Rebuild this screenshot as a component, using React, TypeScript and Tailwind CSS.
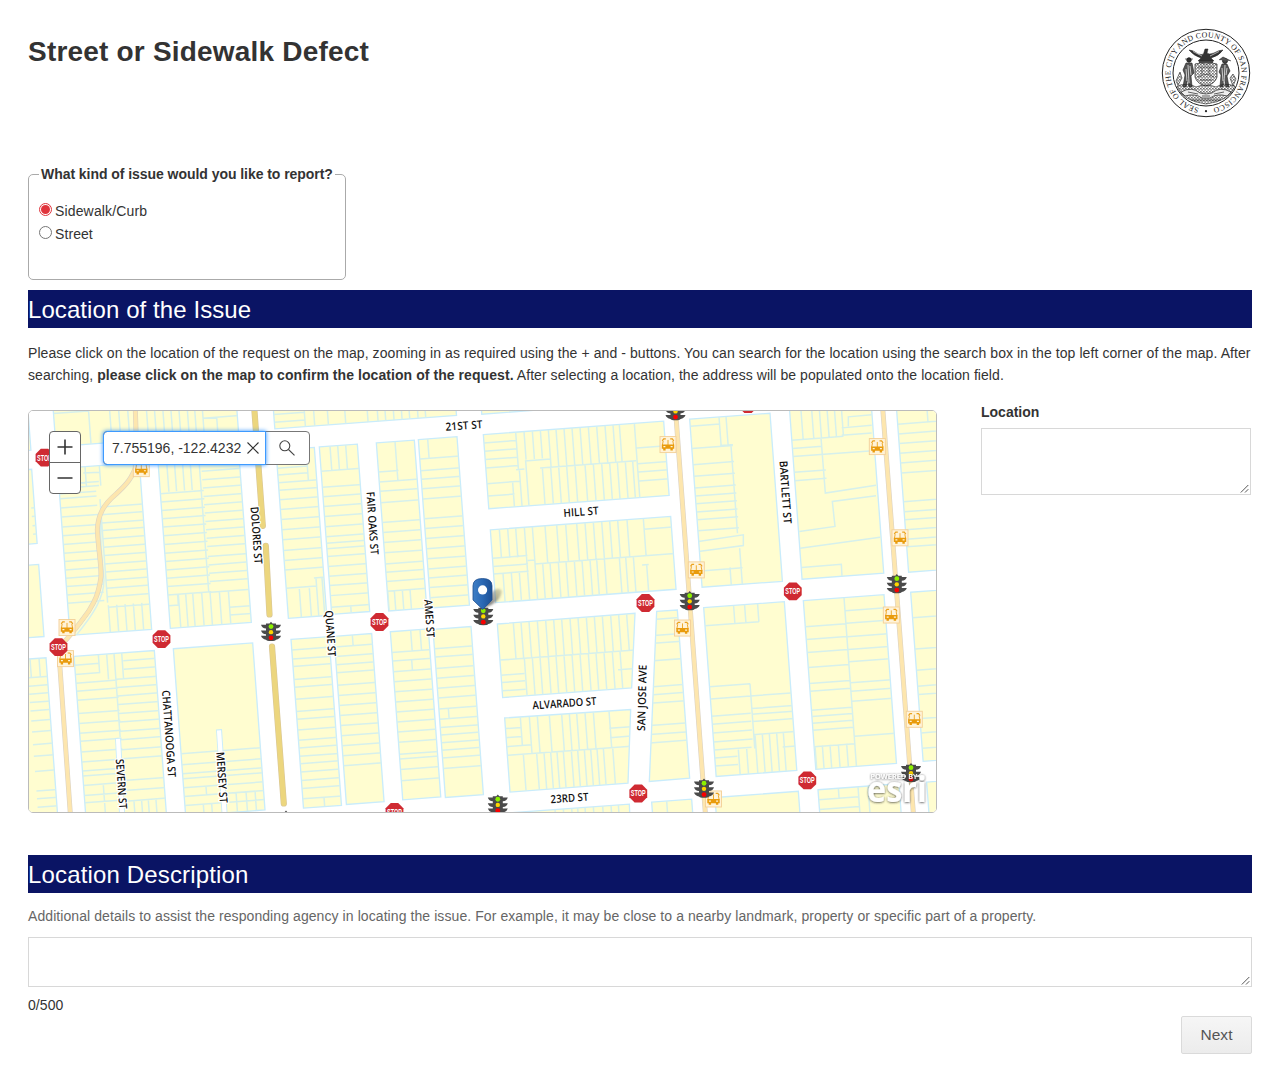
import React from "react";

type P = [number, number];
type Span = [number, number, ...number[]];
interface Parcel {
  box: [number, number, number, number];
  poly?: P[];
  rows?: Span[];
  cols?: Span[];
  extra?: string;
}
interface Sheet {
  at: P;
  parcels: Parcel[];
}

// The street grid is turned slightly anticlockwise.
const K = 0.074;

const sheets: Sheet[] = [
  {
    at: [20, 400],
    parcels: [
      { box: [-60, 40, 84, 118] },
      { box: [-60, 216, 95, 222], rows: [[85, 120, 325, 350, 378, 403]] },
      { box: [-60, 502, 116, 216] },
      {
        box: [98, 8, 548, 133],
        rows: [[0, 105, 42], [445, 560, 56]],
        cols: [[25, 140, 205, 268, 295, 322, 378, 402, 427, 451, 475, 500, 522, 545], [80, 140, 590]],
      },
      {
        box: [113, 207, 245, 499],
        rows: [
          [0, 110, 283, 297, 325, 352, 382, 408, 434, 460, 485, 510, 535, 560, 585, 610],
          [120, 250, 322, 345, 370, 392, 417, 442, 467, 492, 516, 541, 565, 590, 622],
          [60, 120, 250, 262],
        ],
        cols: [[0, 60, 195, 238], [100, 410, 240], [418, 500, 265, 290, 315, 340, 365]],
        extra: "M190 220 L240 218 M245 330 C290 270 320 260 345 220 M165 710 C215 650 258 590 251 530 C246 470 236 400 245 340",
      },
      {
        box: [412, 158, 243, 527],
        rows: [
          [0, 130, 282, 307, 332, 357, 382, 408, 434, 460, 485, 510, 535, 560, 585],
          [128, 250, 215, 240, 265, 290, 315, 340, 365, 390, 415, 440, 470, 495, 520, 545, 577],
          [180, 245, 622, 645],
        ],
        cols: [[30, 120, 440, 463, 487, 510], [20, 425, 536], [427, 530, 475, 497, 518, 545, 570, 598, 625]],
        extra: "M447 617 L475 615 L473 585",
      },
    ],
  },
  {
    at: [250, 400],
    parcels: [
      {
        box: [68, 0, 545, 88],
        rows: [[0, 92, 45, 68]],
        cols: [[30, 90, 162, 190, 231, 283, 350, 380, 403, 428, 452, 475, 500, 523]],
      },
      {
        box: [78, 152, 115, 503],
        rows: [[0, 90, 206, 226], [0, 120, 249, 272, 300, 329, 359, 390, 420, 452, 482, 510], [0, 90, 565], [85, 120, 534]],
        cols: [[0, 95, 168], [418, 505, 148, 178], [390, 505, 198, 216]],
      },
      {
        box: [208, 142, 114, 501],
        rows: [[0, 120, 215, 263, 291, 320, 350, 381, 411, 430, 447, 470, 500, 529, 557, 587, 622]],
        cols: [[0, 73, 240, 263, 287], [478, 505, 302]],
      },
      {
        box: [379, 130, 114, 503],
        rows: [[0, 60, 217], [0, 120, 247, 275, 309, 368, 398, 428, 459, 492, 517, 545, 574]],
        cols: [[0, 117, 435], [443, 505, 413, 433, 457, 480]],
      },
      {
        box: [505, 120, 116, 504],
        rows: [[0, 120, 178, 213, 239, 267, 298, 357, 386, 416, 447, 477, 507, 534, 563, 593]],
        cols: [[0, 57, 533]],
      },
    ],
  },
  {
    at: [480, 400],
    parcels: [
      { box: [2, 0, 200, 44] },
      {
        box: [10, 105, 541, 222],
        rows: [[0, 98, 130, 155, 180, 205], [0, 98, 252], [0, 80, 289], [118, 195, 184], [162, 450, 205], [455, 545, 145, 192, 217, 244], [90, 115, 210]],
        cols: [
          [0, 112, 107],
          [0, 84, 132],
          [0, 84, 157, 181],
          [0, 112, 205, 228, 252, 276, 300, 325, 350, 375, 399, 418],
          [0, 230, 463],
          [88, 230, 137],
          [112, 230, 118, 187, 212, 236, 260, 285, 315, 340, 365, 389, 412, 436, 458],
          [150, 230, 98],
        ],
      },
      {
        box: [31, 390, 541, 218],
        rows: [[0, 105, 475, 500, 522], [105, 128, 482], [125, 545, 492], [457, 545, 388], [445, 465, 495]],
        cols: [
          [0, 88, 58, 83, 107],
          [0, 230, 133],
          [0, 111, 157, 195, 230, 257, 290, 315, 340, 365, 389, 413, 441],
          [0, 113, 490],
          [111, 230, 165, 188, 210, 235, 258, 283, 306, 330, 350, 373, 418, 437, 460],
          [133, 230, 69, 94, 118],
          [138, 230, 500],
        ],
      },
    ],
  },
  {
    at: [700, 400],
    parcels: [
      {
        box: [-31, 59, 241, 503],
        rows: [[0, 88, 80], [0, 123, 147, 195, 230, 265, 289, 312, 337, 360, 393], [85, 123, 138], [0, 125, 513]],
        cols: [[0, 86, 57, 78], [88, 350, 93], [395, 510, 119], [450, 505, 90]],
        extra: "M-5 425 L130 405 L130 437 L-5 455",
      },
      {
        box: [266, -5, 245, 543],
        rows: [[0, 90, 122, 147], [0, 250, 171], [0, 95, 218, 243], [90, 155, 115]],
        cols: [[0, 125, 300, 332, 355, 378, 400, 421]],
        extra: "M363 115 L376 280 L528 257 M528 288 L397 305 L405 380 L298 395 M300 445 L540 412 M305 503 L424 493 L426 530 M425 107 L515 100 M425 85 L515 77 M445 80 L445 52 L515 46",
      },
      {
        box: [589, 20, 200, 497],
        rows: [[0, 200, 74, 103, 132, 161, 190, 220, 306, 336, 360, 390, 418, 441]],
        cols: [[0, 52, 680]],
      },
    ],
  },
  {
    at: [20, 605],
    parcels: [
      {
        box: [-60, 168, 138, 470],
        rows: [[80, 145, 218, 243, 267, 292, 317, 347, 380, 418, 453, 498, 557, 580, 605]],
        cols: [[0, 57, 30, 57]],
      },
      {
        box: [162, 154, 241, 490],
        rows: [
          [0, 75, 180, 208],
          [0, 124, 234, 258, 285, 325, 355, 384, 408, 440, 470, 497, 512, 540, 570, 592],
          [146, 245, 167, 192],
          [122, 245, 222, 247, 272, 298, 325, 350, 378, 403, 433, 460, 525, 555, 587],
        ],
        cols: [[0, 52, 235], [0, 76, 260, 305], [0, 250, 282], [390, 490, 250], [445, 490, 342, 365, 385, 408]],
      },
      {
        box: [460, 131, 238, 500],
        rows: [[0, 240, 445, 478, 505, 520, 547, 573, 600]],
        cols: [[418, 443, 558], [470, 500, 550, 575], [440, 500, 648, 678, 705]],
      },
    ],
  },
  {
    at: [250, 605],
    parcels: [
      {
        box: [123, 103, 114, 505],
        rows: [[0, 120, 135, 162, 184, 223, 246, 282, 319, 342, 374, 405, 428, 453, 475, 500, 525, 549, 580]],
        cols: [[477, 505, 222]],
      },
      {
        box: [252, 94, 113, 503],
        rows: [[0, 120, 126, 154, 179, 203, 240, 271, 301, 331, 361, 391, 421, 451, 481]],
        cols: [[0, 32, 307]],
      },
      {
        box: [421, 80, 114, 503],
        rows: [[0, 120, 142, 168, 200, 230, 260, 290, 320, 350, 380, 411, 447, 461, 492, 526]],
        cols: [[0, 62, 482, 510], [88, 120, 485]],
      },
      {
        box: [549, 73, 114, 503],
        rows: [[0, 120, 131, 156, 190, 219, 249, 278, 311, 342, 367, 389, 412, 435, 458, 489]],
        cols: [[238, 269, 595]],
      },
    ],
  },
  {
    at: [480, 605],
    parcels: [
      {
        box: [52, 57, 412, 220],
        poly: [[52, 57], [465, 25], [455, 248], [68, 277]],
        rows: [[0, 412, 165], [0, 70, 210, 232, 257], [350, 412, 194]],
        cols: [
          [0, 108, 100, 123, 147, 172, 197, 221, 245, 270, 294, 319, 343, 367, 392, 416, 440],
          [108, 235, 133, 157, 180, 205, 228, 252, 276, 300, 325, 348, 372, 397, 420],
        ],
      },
      {
        box: [74, 340, 378, 222],
        poly: [[74, 338], [452, 313], [444, 533], [90, 560]],
        rows: [[0, 400, 450], [0, 48, 370, 397], [0, 75, 424], [310, 400, 369, 397]],
        cols: [
          [0, 85, 121],
          [0, 110, 148, 172, 208, 245, 268, 290, 315, 340, 387],
          [110, 235, 130, 170, 192, 212, 231, 250, 274, 293, 313, 332, 351, 370, 398],
        ],
      },
      {
        box: [90, 622, 358, 30],
        poly: [[90, 622], [448, 596], [450, 640], [90, 640]],
        cols: [[0, 40, 225, 250, 275, 293, 315, 340, 368, 393, 415]],
      },
      {
        box: [508, 20, 122, 510],
        poly: [[530, 19], [592, 15], [629, 518], [508, 528]],
        rows: [[-40, 130, 47, 95, 118, 170, 247, 271, 296, 362, 389, 414]],
      },
      { box: [515, 590, 120, 50], cols: [[0, 50, 560]] },
    ],
  },
  {
    at: [700, 605],
    parcels: [
      {
        box: [11, 8, 242, 505],
        rows: [
          [0, 162, 62],
          [0, 122, 245],
          [0, 242, 281],
          [0, 117, 333, 357, 383, 410],
          [0, 112, 434],
          [0, 68, 458, 482],
          [120, 245, 310, 327, 349, 388],
          [205, 245, 425],
        ],
        cols: [[-10, 54, 100, 133], [-10, 54, 172], [237, 430, 150], [430, 505, 115, 140], [390, 505, 165, 187, 208, 230, 250]],
      },
      {
        box: [310, -13, 242, 505],
        rows: [
          [0, 122, 65, 103, 142, 187, 235, 258, 315, 334, 354, 375, 424],
          [123, 245, 17, 55, 95, 133, 170, 233, 258, 288, 393],
        ],
        cols: [[0, 505, 432], [435, 505, 345, 367, 390, 415, 440]],
      },
      { box: [632, -38, 200, 506], rows: [[0, 200, 38, 132, 195, 243, 268, 340, 383, 429]] },
      { box: [354, 553, 243, 100], rows: [[0, 120, 583, 612]], cols: [[0, 32, 415], [0, 100, 474, 504]] },
      { box: [45, 576, 250, 100] },
      { box: [680, 530, 200, 100] },
    ],
  },
];

function ParcelShape({ parcel, id }: { parcel: Parcel; id: string }) {
  const [x0, y0, w, h] = parcel.box;
  const pt = (u: number, v: number) => `${(x0 + u + K * v).toFixed(1)} ${(y0 + v - K * u).toFixed(1)}`;
  const outline = parcel.poly
    ? "M" + parcel.poly.map((p) => p.join(" ")).join("L") + "Z"
    : `M${pt(0, 0)}L${pt(w, 0)}L${pt(w, h)}L${pt(0, h)}Z`;
  let d = parcel.extra ?? "";
  (parcel.rows ?? []).forEach(([a, b, ...ys]) =>
    ys.forEach((y) => {
      const v = y - y0 + K * a;
      d += `M${pt(a, v)}L${pt(b, v)}`;
    }),
  );
  (parcel.cols ?? []).forEach(([a, b, ...xs]) =>
    xs.forEach((x) => {
      const u = x - x0 - K * a;
      d += `M${pt(u, a)}L${pt(u, b)}`;
    }),
  );
  return (
    <g>
      <clipPath id={id}>
        <path d={outline} />
      </clipPath>
      <path d={outline} fill="#fffdd0" stroke="#c9ecfb" strokeWidth={4} />
      <path d={d} clipPath={`url(#${id})`} fill="none" stroke="#d6f0ec" strokeWidth={4.5} />
    </g>
  );
}

const stops: P[] = [[44.5, 458], [161.5, 639], [58.5, 647], [379.5, 622], [394.5, 811.5], [645.5, 603], [638.3, 793], [792.8, 591.5], [748, 404.5], [807.3, 780]];
const lights: P[] = [[675.5, 411.5], [271, 631.7], [483.3, 616], [689.7, 601], [896.8, 584], [497.8, 804], [704, 788], [911, 772.5], [286, 820]];
const buses: P[] = [[141.3, 469], [668, 445], [696.3, 570], [877.3, 447], [900, 538], [67, 627.5], [65.5, 658.5], [682.5, 628], [713.5, 798.5], [891.3, 615], [914.3, 719]];
const streets: [string, number, number, number, number][] = [
  ["21ST ST", 464, 426, -4, 37],
  ["HILL ST", 581, 512, -4, 35],
  ["ALVARADO ST", 564.5, 703, -4, 64],
  ["23RD ST", 569.5, 797.5, -4, 38],
  ["BARTLETT ST", 785.5, 492.5, 86, 63],
  ["FAIR OAKS ST", 372.5, 523.5, 86, 63],
  ["DOLORES ST", 256.5, 535.5, 86, 57],
  ["QUANE ST", 330.5, 633.5, 86, 46],
  ["AMES ST", 429.5, 618.5, 86, 38],
  ["CHATTANOOGA ST", 169, 733.5, 86, 87],
  ["SEVERN ST", 121.5, 783.5, 86, 50],
  ["MERSEY ST", 222, 777, 86, 51],
  ["SAN JOSE AVE", 642, 697.5, -88.5, 66],
];

function StopSign({ x, y }: { x: number; y: number }) {
  return (
    <g transform={`translate(${x} ${y})`}>
      <path d="M-3.7-8.9H3.7L8.9-3.7V3.7L3.7 8.9H-3.7L-8.9 3.7V-3.7Z" fill="#cf2a32" />
      <text y="3" textAnchor="middle" fontSize="8.6" fontWeight="700" fontFamily="Liberation Sans, sans-serif" fill="#fff" textLength="15" lengthAdjust="spacingAndGlyphs">
        STOP
      </text>
    </g>
  );
}

function TrafficLight({ x, y }: { x: number; y: number }) {
  return (
    <g transform={`translate(${x} ${y})`}>
      <path d="M-5-8.2H-1.5L0-10L1.5-8.2H5V-7H10Q9-3.6 5-3.2V-1.2H10Q9 2.2 5 2.6V4H10Q9 7.2 5 8Q4.5 9.2 0 9.2Q-4.5 9.2-5 8Q-9 7.2-10 4H-5V2.6Q-9 2.2-10-1.2H-5V-3.2Q-9-3.6-10-7H-5Z" fill="#4a4a4a" />
      <circle cy="-5.2" r="2.4" fill="#8cf000" />
      <circle cy=".4" r="2.2" fill="#ffd500" />
      <circle cy="6.1" r="2.4" fill="#f80000" />
    </g>
  );
}

function BusStop({ x, y }: { x: number; y: number }) {
  return (
    <g transform={`translate(${x} ${y})`}>
      <rect x="-8" y="-8" width="16" height="16" fill="#fff3d8" stroke="#f3cf97" strokeWidth=".9" />
      <path d="M-5.8-3.6L-4.3-5.6H-2.2M5.8-3.6L4.3-5.6H2.2" fill="none" stroke="#eba21e" strokeWidth="1.2" />
      <path d="M-4.8-3.6L-5.6.5M4.8-3.6L5.6.5M0-4.6V.5" stroke="#eba21e" strokeWidth=".9" />
      <path d="M-6.2 0H6.2V4.2H4.8V5.8H2.4V4.2H-2.4V5.8H-4.8V4.2H-6.2Z" fill="#e99b0c" />
      <path d="M-4.6 2.1H-2.6M2.6 2.1H4.6" stroke="#fff3d8" strokeWidth="1.2" />
    </g>
  );
}

function StreetMap() {
  return (
    <svg className="block h-full w-full" viewBox="29 411.5 907 400" preserveAspectRatio="none">
      <defs>
        <linearGradient id="pin" x1="0" x2="1">
          <stop offset="0" stopColor="#3f7fc6" />
          <stop offset=".5" stopColor="#2a68b4" />
          <stop offset="1" stopColor="#1c4f94" />
        </linearGradient>
        <linearGradient id="pinShade" x1="0" x2="1" y1="1" y2="0">
          <stop offset="0" stopColor="#333" stopOpacity=".8" />
          <stop offset="1" stopColor="#665" stopOpacity=".25" />
        </linearGradient>
        <filter id="soft" x="-30%" y="-30%" width="160%" height="160%">
          <feGaussianBlur stdDeviation="1" />
        </filter>
        <filter id="logoShade" x="-20%" y="-20%" width="140%" height="150%">
          <feDropShadow dx="0" dy=".5" stdDeviation="1.3" floodColor="#222" floodOpacity=".85" />
        </filter>
      </defs>
      <rect x="29" y="411" width="908" height="402" fill="#fff" />
      {sheets.map((s, i) => (
        <g key={i} transform={`translate(${s.at[0]} ${s.at[1]}) scale(.33333)`}>
          {s.parcels.map((p, j) => (
            <ParcelShape key={j} parcel={p} id={`lot-${i}-${j}`} />
          ))}
        </g>
      ))}
      {/* Dead-end lanes */}
      <g fill="none" strokeLinecap="butt">
        <path d="M118 737.5L122 812M219 729L224.5 812" stroke="#c9ecfb" strokeWidth="6" />
        <path d="M118 738.5L122 812M219 730L224.5 812" stroke="#fff" strokeWidth="4.2" />
      </g>
      {/* Transit streets */}
      <g fill="none">
        {[["#dcd3c4", 5], ["#fde6ae", 3.8]].map(([c, w]) => (
          <g key={c} stroke={c as string} strokeWidth={w}>
            <path transform="translate(20 400) scale(.33333)" vectorEffect="non-scaling-stroke" d="M346 30L351 190C338 235 318 256 288 283C250 315 234 345 232 390C236 460 244 490 243 530C235 590 220 610 205 635C180 670 155 705 120 738L119 790L151 1240" />
            <path d="M675.5 410L705.3 812M882.8 410L913.3 812" />
          </g>
        ))}
        <g strokeLinecap="round">
          <path d="M254 405L262.8 526M265.8 546L269.5 614.5M272 646.5L283.8 803" stroke="#d9c798" strokeWidth="6.2" />
          <path d="M254 405L262.8 526M265.8 546L269.5 614.5M272 646.5L283.8 803" stroke="#ecd67e" strokeWidth="5" />
        </g>
      </g>
      {buses.map(([x, y]) => <BusStop key={`${x}-${y}`} x={x} y={y} />)}
      {lights.map(([x, y]) => <TrafficLight key={`${x}-${y}`} x={x} y={y} />)}
      {stops.map(([x, y]) => <StopSign key={`${x}-${y}`} x={x} y={y} />)}
      {streets.map(([name, x, y, r, len]) => (
        <text
          key={name}
          transform={`translate(${x} ${y}) rotate(${r})`}
          y="3.9"
          textAnchor="middle"
          textLength={len}
          lengthAdjust="spacingAndGlyphs"
          fontFamily="Open Sans, Noto Sans, sans-serif"
          fontSize="11"
          fontWeight="600"
          fill="#111"
          stroke="#fff"
          strokeWidth="2.6"
          strokeLinejoin="round"
          paintOrder="stroke"
        >
          {name}
        </text>
      ))}
      {/* Location pin */}
      <path d="M483 608L492 592Q498 586 502 591Q501 600 491 605Z" fill="url(#pinShade)" filter="url(#soft)" />
      <path d="M473 586Q473 578.6 482.5 578.6Q492 578.6 492 586V600L482.8 609.5L473 600Z" fill="url(#pin)" stroke="#1d4e8e" strokeWidth=".8" />
      <circle cx="482.6" cy="590" r="4.6" fill="#fff" />
      <g filter="url(#logoShade)" fill="#fff" fontFamily="Open Sans, Noto Sans, sans-serif">
        <text x="870.5" y="778.6" fontSize="7" fontWeight="600" textLength="47" lengthAdjust="spacingAndGlyphs">POWERED BY</text>
        <text x="867" y="801.5" fontSize="35" fontWeight="700" textLength="60" lengthAdjust="spacingAndGlyphs">esri</text>
      </g>
    </svg>
  );
}

function Seal() {
  return (
    <svg className="h-[90px] w-[90px]" viewBox="-45 -45 90 90" fill="none" stroke="#222">
      <defs>
        <path id="ring" d="M0 35.6A35.6 35.6 0 1 1 .01 35.6" />
        <pattern id="hatch" width="3" height="3" patternUnits="userSpaceOnUse">
          <path d="M0 .6H2M1 1.8H3M.5 0V1.5M2.2 1.5V3" stroke="#333" strokeWidth=".5" />
        </pattern>
      </defs>
      <circle r="43.7" strokeWidth="1" />
      <circle r="33" strokeWidth="1" />
      <text fill="#222" stroke="none" fontFamily="Liberation Serif, serif" fontSize="7.8">
        <textPath href="#ring" startOffset="7" textLength="209" lengthAdjust="spacing">SEAL OF THE CITY AND COUNTY OF SAN FRANCISCO</textPath>
      </text>
      <circle cy="38.2" r="1.1" fill="#222" stroke="none" />
      {/* Eagle crest */}
      <path d="M-17-23Q-13-23-8-19Q-4-18-2.5-19L-1-24L2-24L1-20Q3-18 8-20Q13-23 17-23Q13-17 5-15L8-12H-8L-5-15Q-12-17-17-23Z" fill="#333" strokeWidth=".5" />
      <path d="M-13-21.5L-4-17M13-21.5L4-17" stroke="#fff" strokeWidth=".6" />
      <path d="M-7-11H7" strokeWidth="1.6" />
      {/* Shield */}
      <path d="M-11-9Q-6-11 0-9Q6-11 11-9V4Q9 11 0 13Q-9 11-11 4Z" fill="url(#hatch)" strokeWidth=".7" />
      <path d="M-8-6H8M-8 4Q0-1 8 4M-4 1V-5M3 1V-5M-6 7H6" strokeWidth=".6" />
      {/* Supporters */}
      <circle cx="-17" cy="-13" r="2.2" fill="#333" />
      <path d="M-21-14H-13M-20-10H-14L-12 0L-15 3L-14 14H-17L-18 5L-20 14H-23L-21 2L-23-3Z" fill="#555" strokeWidth=".6" />
      <path d="M-18-8L-17 10M-16-7L-15 2M-20-4L-19 8" stroke="#fff" strokeWidth=".7" />
      <circle cx="19" cy="-12" r="2.4" fill="#444" />
      <path d="M13-13L17-16L21-14L25-12M16-9H21L24-2L21 3L23 14H20L18 5L17 14H14L15 2L13-1Z" fill="#555" strokeWidth=".6" />
      <path d="M19-8L18 10M21-5L20 2M16-5L17 8" stroke="#fff" strokeWidth=".7" />
      <path d="M-30 8L-26-1L-24 5L-28 12ZM24 5L27 1L30 6L27 13Z" fill="url(#hatch)" strokeWidth=".6" />
      {/* Ground and motto ribbon */}
      <path d="M-29 13Q-18 9-10 14Q0 10 10 14Q18 9 29 13Q24 28 0 31Q-24 28-29 13Z" fill="url(#hatch)" strokeWidth=".6" />
      <path d="M-25 19Q-14 13-6 20Q0 22 6 20Q14 13 25 19L21 23Q11 20 4 25H-4Q-11 20-21 23Z" fill="#eee" strokeWidth=".7" />
      <path d="M-18 19L-8 21M18 19L8 21M-4 23H4M-15 27H15" strokeWidth=".7" />
    </svg>
  );
}

function Grip() {
  return (
    <svg className="pointer-events-none absolute right-px bottom-px h-[9px] w-[9px]" viewBox="0 0 9 9" stroke="#444" strokeWidth=".9">
      <path d="M.8 8.5L8.3 1M5 8.5L8.3 5.2" />
    </svg>
  );
}

export default function App() {
  return (
    <main className="h-[1092px] overflow-hidden bg-white px-7 font-['Liberation_Sans',Arial,sans-serif] text-sm tracking-[0.08px] text-[#333]">
      <header className="flex h-[166px] items-start justify-between pt-7">
        <h1 className="mt-[6px] text-[28px] leading-9 font-bold tracking-[0.2px] whitespace-nowrap">Street or Sidewalk Defect</h1>
        <div className="mr-px">
          <Seal />
        </div>
      </header>

      <fieldset className="h-[114px] w-[318px] rounded-[5px] border border-[#aaa] px-[10px]">
        <legend className="px-[2px] text-[14px] leading-[17px] font-bold tracking-[-0.05px] whitespace-nowrap">What kind of issue would you like to report?</legend>
        <div className="mt-[16px] flex flex-col">
          <label className="flex h-[23px] items-center gap-[3px]">
            <span className="-mt-[3px] flex h-[13px] w-[13px] items-center justify-center rounded-full border border-[#e0343c]">
              <span className="h-[9px] w-[9px] rounded-full bg-[#e0343c]" />
            </span>
            <span className="tracking-[0.15px]">Sidewalk/Curb</span>
          </label>
          <label className="flex h-[23px] items-center gap-[3px]">
            <span className="-mt-[3px] h-[13px] w-[13px] rounded-full border border-[#767676]" />
            Street
          </label>
        </div>
      </fieldset>

      <h2 className="mt-[9.5px] h-[38px] bg-[#0a1464] text-2xl leading-[39px] text-white">Location of the Issue</h2>

      <p className="mt-[14.5px] h-[44px] leading-[22px] whitespace-nowrap">
        Please click on the location of the request on the map, zooming in as required using the + and - buttons. You can search for the location using the search box in the top left corner of the map. After
        <br />
        <span className="tracking-[0.065px]">
          searching, <strong>please click on the map to confirm the location of the request.</strong> After selecting a location, the address will be populated onto the location field.
        </span>
      </p>

      <section className="mt-6 flex items-start gap-11">
        <div className="relative h-[403px] w-[909px] overflow-hidden rounded-[5px] border border-[#bbb]">
          <StreetMap />
          <div className="absolute top-5 left-5 flex h-[63px] w-8 flex-col rounded-[4px] border border-[#666] bg-white">
            <span className="flex flex-1 items-center justify-center border-b border-[#666]">
              <svg className="h-4 w-4" viewBox="0 0 16 16" stroke="#333" strokeWidth="1.6"><path d="M.5 8H15.5M8 .5V15.5" /></svg>
            </span>
            <span className="flex flex-1 items-center justify-center">
              <svg className="h-4 w-4" viewBox="0 0 16 16" stroke="#333" strokeWidth="1.6"><path d="M.5 8H15.5" /></svg>
            </span>
          </div>
          <div className="absolute top-5 left-[74px] flex h-[34px] w-[207px] rounded-[4px] border border-[#777] bg-white">
            <div className="-m-px flex h-[34px] w-[163px] items-center justify-between rounded-l-[4px] border border-[#3d9aff] pr-[6px] pl-2 shadow-[0_0_4px_#2d90ff]">
              <span className="text-sm tracking-[0px] whitespace-nowrap">7.755196, -122.4232</span>
              <svg className="h-3 w-3" viewBox="0 0 12 12" stroke="#333" strokeWidth="1.1"><path d="M.5 .5L11.5 11.5M11.5 .5L.5 11.5" /></svg>
            </div>
            <div className="flex flex-1 items-center justify-center">
              <svg className="h-4 w-4" viewBox="0 0 16 16" fill="none" stroke="#444" strokeWidth="1.1"><circle cx="5.8" cy="5.8" r="5" /><path d="M9.5 9.5L15.5 15.3" /></svg>
            </div>
          </div>
        </div>
        <div className="w-[270px] pt-px">
          <label className="-mt-[7px] mb-[7px] block leading-[17px] font-bold tracking-[0px]">Location</label>
          <div className="relative h-[67px] border border-[#d8d8d8]">
            <Grip />
          </div>
        </div>
      </section>

      <h2 className="mt-[42px] h-[38px] bg-[#0a1464] text-2xl leading-[39px] tracking-[0.15px] text-white">Location Description</h2>
      <p className="mt-3 h-[22px] leading-[22px] whitespace-nowrap text-[#666]">
        Additional details to assist the responding agency in locating the issue. For example, it may be close to a nearby landmark, property or specific part of a property.
      </p>
      <div className="relative mt-[10px] h-[50px] border border-[#d8d8d8]">
        <Grip />
      </div>
      <div className="mt-[10px] leading-4">0/500</div>
      <div className="mt-[3px] flex justify-end">
        <button className="h-[38px] w-[71px] rounded-[2px] border border-[#dadada] bg-linear-to-b from-[#f6f6f6] to-[#ececec] text-[15.5px] text-[#555]">Next</button>
      </div>
    </main>
  );
}
